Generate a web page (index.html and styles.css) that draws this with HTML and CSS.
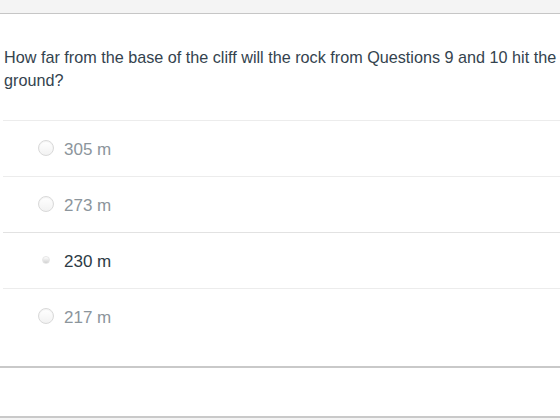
FILE: index.html
```html
<!DOCTYPE html>
<html lang="en">
<head>
    <meta charset="UTF-8">
    <meta name="viewport" content="width=device-width, initial-scale=1.0">
    <title>Question 11</title>
    <link rel="stylesheet" href="styles.css">
</head>
<body>
    <div class="topbar"></div>
    <div class="question">
        <p class="question-text">How far from the base of the cliff will the rock from Questions 9 and 10 hit the ground?</p>
        <div class="answers">
            <label class="answer">
                <span class="radio"></span>
                <span class="answer-text">305 m</span>
            </label>
            <label class="answer">
                <span class="radio"></span>
                <span class="answer-text">273 m</span>
            </label>
            <label class="answer selected">
                <span class="radio"></span>
                <span class="answer-text">230 m</span>
            </label>
            <label class="answer">
                <span class="radio"></span>
                <span class="answer-text">217 m</span>
            </label>
        </div>
    </div>
    <div class="footer"></div>
</body>
</html>
```

FILE: styles.css
```css
* { margin: 0; padding: 0; box-sizing: border-box; }
body {
    font-family: 'Liberation Sans', Arial, Helvetica, sans-serif;
    background: #f4f4f4;
    color: #2d3b45;
    width: 560px;
    height: 420px;
    overflow: hidden;
}
.topbar {
    height: 14px;
    background: #f4f4f4;
    border-bottom: 1px solid #c6c6c6;
}
.question {
    background: #fff;
    height: 354px;
    padding-top: 32px;
    border-bottom: 2px solid #c9c9c9;
}
.question-text {
    font-size: 16.2px;
    line-height: 23px;
    padding: 0 0 0 4px;
    margin-bottom: 28px;
    color: #34434e;
}
.answers {
    margin-left: 3px;
}
.answer {
    display: flex;
    align-items: center;
    gap: 10px;
    height: 56px;
    padding-left: 35px;
    padding-top: 2px;
    border-top: 1px solid #ececec;
}
.answer:nth-child(3) {
    border-top-color: #e2e2e2;
}
.radio {
    width: 16px;
    height: 16px;
    margin-top: -3px;
    border-radius: 50%;
    border: 1px solid #d9d9d9;
    background: linear-gradient(#ffffff, #f2f2f2);
    box-shadow: inset 0 1px 1px rgba(0,0,0,0.05);
    display: flex;
    align-items: center;
    justify-content: center;
}
.answer-text {
    font-size: 17px;
    color: #8c959c;
}
.answer.selected .radio {
    border: none;
    background: none;
    box-shadow: none;
}
.answer.selected .radio::after {
    content: '';
    width: 6px;
    height: 6px;
    border-radius: 50%;
    background: linear-gradient(#ffffff, #d0d0d0);
    border: 1px solid #e6e6e6;
}
.answer.selected .answer-text {
    color: #2d3b45;
}
.footer {
    height: 50px;
    background: #fff;
    border-bottom: 2px solid #c9c9c9;
}
```
